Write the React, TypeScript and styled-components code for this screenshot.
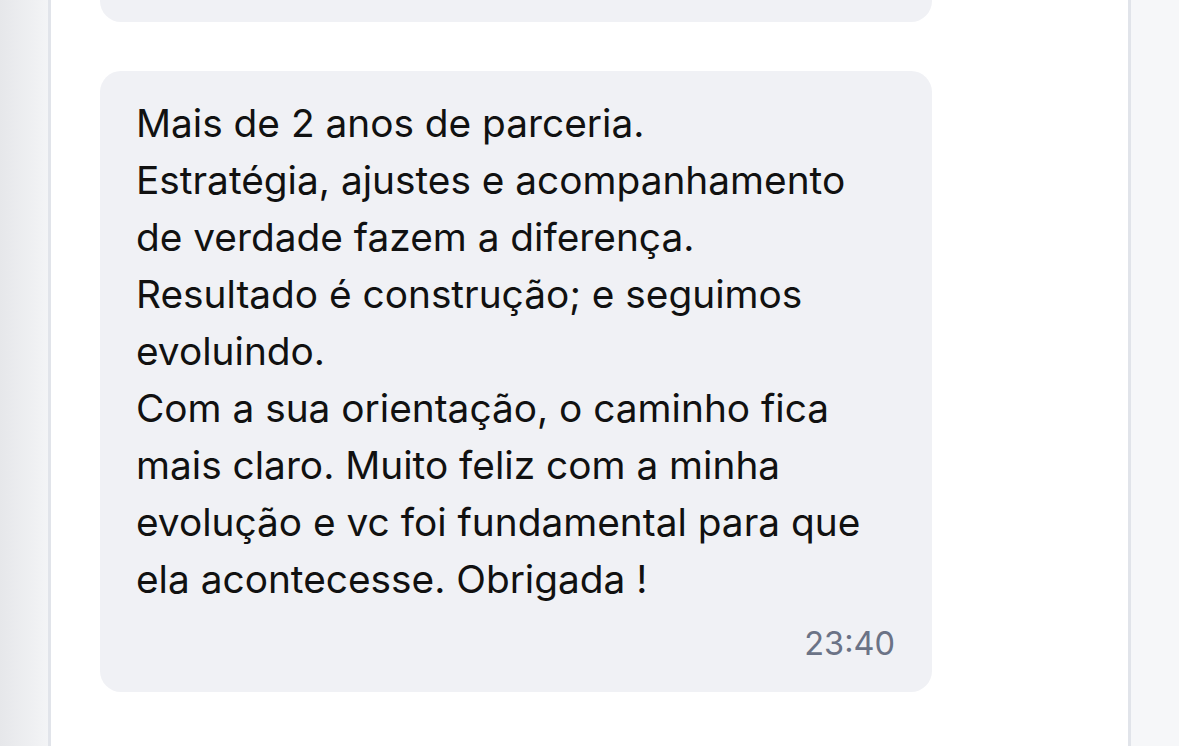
import React from "react";
import styled, { createGlobalStyle } from "styled-components";

const Global = createGlobalStyle`
  html, body { margin: 0; padding: 0; height: 100%; overflow: hidden; }
  body { font-family: Inter, "Noto Sans", sans-serif; background: #f6f7f9; }
  #root { height: 100%; }
`;

const Frame = styled.div`
  display: flex;
  height: 746px;
  width: 1179px;
  overflow: hidden;
`;

const SideStrip = styled.div<{ $side: "left" | "right" }>`
  flex: 0 0 48px;
  background: ${(p) =>
    p.$side === "left"
      ? "linear-gradient(to right, #e6e7ea, #f3f4f6)"
      : "#f6f7f9"};
  ${(p) =>
    p.$side === "left"
      ? "border-right: 3px solid #e1e4ea;"
      : "border-left: 3px solid #e1e4ea;"}
`;

const Panel = styled.main`
  flex: 1;
  background: #ffffff;
  overflow: hidden;
  padding: 0 49px;
`;

const MessageList = styled.div`
  display: flex;
  flex-direction: column;
  gap: 49px;
  margin-top: -200px;
`;

const Bubble = styled.div<{ $height?: number }>`
  width: 832px;
  box-sizing: border-box;
  background: #f0f1f5;
  border-radius: 21px;
  padding: 23px 37px 28px 36px;
  ${(p) => (p.$height ? `height: ${p.$height}px;` : "")}
  display: flex;
  flex-direction: column;
`;

const MessageText = styled.p`
  margin: 0;
  font-size: 38.8px;
  line-height: 57px;
  color: #111111;
  white-space: pre-line;
`;

const Time = styled.span`
  align-self: flex-end;
  margin-top: 17px;
  font-size: 32.5px;
  line-height: 40px;
  color: #6b7386;
`;

const text = `Mais de 2 anos de parceria.
Estratégia, ajustes e acompanhamento de verdade fazem a diferença.
Resultado é construção; e seguimos evoluindo.
Com a sua orientação, o caminho fica mais claro. Muito feliz com a minha evolução e vc foi fundamental para que ela acontecesse. Obrigada !`;

export default function App() {
  return (
    <>
      <Global />
      <Frame>
        <SideStrip $side="left" />
        <Panel>
          <MessageList>
            <Bubble $height={222} />
            <Bubble>
              <MessageText>{text}</MessageText>
              <Time>23:40</Time>
            </Bubble>
          </MessageList>
        </Panel>
        <SideStrip $side="right" />
      </Frame>
    </>
  );
}
